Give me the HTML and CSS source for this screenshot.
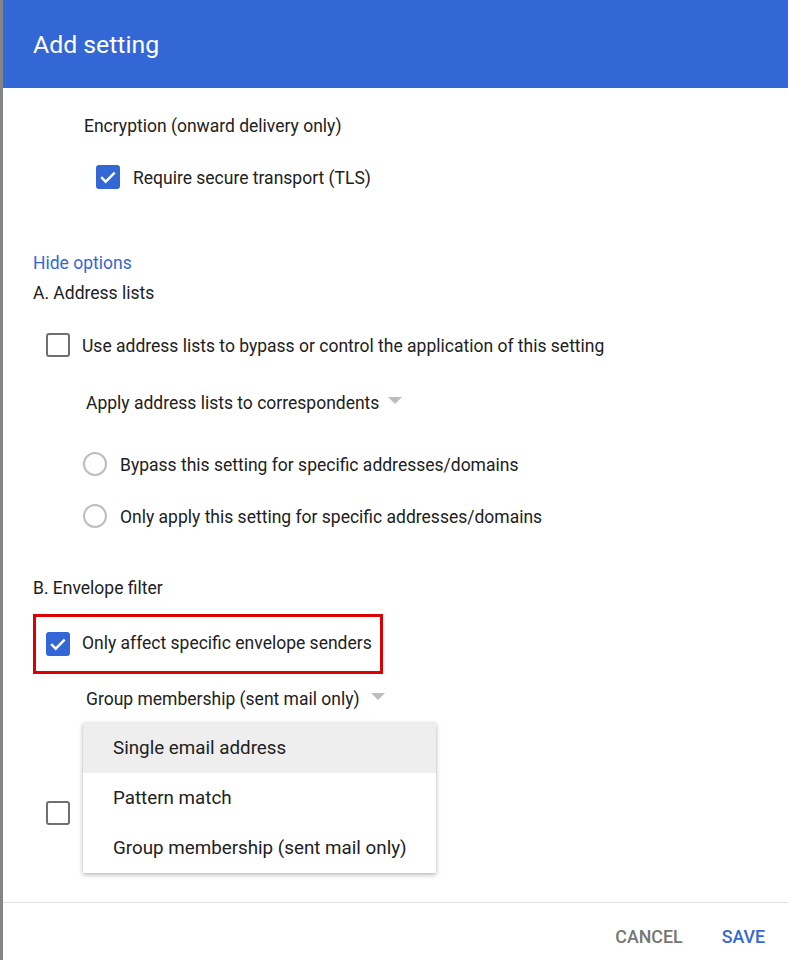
FILE: index.html
```html
<!DOCTYPE html>
<html>
<head>
<meta charset="utf-8">
<link rel="stylesheet" href="styles.css">
</head>
<body>
<div class="page">
  <div class="backdrop"></div>
  <div class="dialog">
    <div class="header"><h1 class="title">Add setting</h1></div>
    <div class="content">
      <div class="row r-enc">Encryption (onward delivery only)</div>
      <div class="row r-tls">
        <span class="cb checked"><svg viewBox="0 0 24 24" width="24" height="24"><path d="M5.2 12.2l4.5 4.5 9-9" fill="none" stroke="#fff" stroke-width="2.4"/></svg></span>
        <span class="lbl-tls">Require secure transport (TLS)</span>
      </div>
      <div class="row r-hide"><a class="link">Hide options</a></div>
      <div class="row r-a">A. Address lists</div>
      <div class="row r-use">
        <span class="cb"></span>
        <span class="lbl">Use address lists to bypass or control the application of this setting</span>
      </div>
      <div class="row r-apply">
        <span class="select">Apply address lists to correspondents</span><span class="tri tri-apply"></span>
      </div>
      <div class="row r-rad1">
        <span class="radio"></span><span class="lbl-r">Bypass this setting for specific addresses/domains</span>
      </div>
      <div class="row r-rad2">
        <span class="radio"></span><span class="lbl-r">Only apply this setting for specific addresses/domains</span>
      </div>
      <div class="row r-b">B. Envelope filter</div>
      <div class="hl">
        <span class="cb checked"><svg viewBox="0 0 24 24" width="24" height="24"><path d="M5.2 12.2l4.5 4.5 9-9" fill="none" stroke="#fff" stroke-width="2.4"/></svg></span>
        <span class="lbl">Only affect specific envelope senders</span>
      </div>
      <div class="row r-group">
        <span class="select">Group membership (sent mail only)</span><span class="tri tri-group"></span>
        <div class="menu">
          <div class="item active">Single email address</div>
          <div class="item">Pattern match</div>
          <div class="item">Group membership (sent mail only)</div>
        </div>
      </div>
      <div class="row r-last">
        <span class="cb"></span>
      </div>
    </div>
    <div class="footer">
      <span class="btn cancel">CANCEL</span>
      <span class="btn save">SAVE</span>
    </div>
  </div>
</div>
</body>
</html>
```

FILE: styles.css
```css
html, body {
  margin: 0;
  padding: 0;
  height: 100%;
  background: #fff;
}
body {
  font-family: Roboto, "Noto Sans", "Liberation Sans", sans-serif;
  font-size: 17.5px;
  color: #212121;
}
.page {
  display: flex;
  height: 960px;
  overflow: hidden;
}
.backdrop {
  width: 3px;
  flex: none;
  background: #858585;
}
.dialog {
  flex: 1;
  display: flex;
  flex-direction: column;
  background: #fff;
}
.header {
  height: 88px;
  background: #3367d6;
  display: flex;
  align-items: center;
  padding-left: 30px;
  flex: none;
}
.title {
  margin: 0;
  font-size: 24.8px;
  font-weight: 400;
  color: #fff;
  padding-bottom: 0;
}
.content {
  padding-left: 30px;
  padding-top: 26px;
  height: 788px;
  flex: none;
}
.row {
  display: flex;
  align-items: center;
  height: 24px;
  position: relative;
}
.r-enc { padding-left: 51px; }
.r-tls { margin-top: 27px; padding-left: 63px; }
.lbl-tls { margin-left: 13px; padding-top: 1px; }
.r-hide { margin-top: 62px; }
.link { color: #3367d6; }
.r-a { margin-top: 6px; }
.r-use { margin-top: 28px; padding-left: 13px; }
.lbl { margin-left: 12px; padding-top: 1px; }
.r-apply { margin-top: 34px; padding-left: 53px; }
.r-rad1 { margin-top: 37px; padding-left: 50px; }
.r-rad2 { margin-top: 28px; padding-left: 50px; }
.lbl-r { margin-left: 13px; padding-top: 1px; }
.r-b { margin-top: 48px; }
.hl {
  margin-top: 14px;
  display: flex;
  align-items: center;
  height: 54px;
  border: 3px solid #dd0000;
  padding-left: 10px;
  box-sizing: content-box;
  width: 334px;
}
.hl .lbl { padding-top: 0; margin-top: -2px; }
.r-group { margin-top: 13px; padding-left: 53px; }
.r-last { margin-top: 90px; padding-left: 13px; }

.cb {
  width: 24px;
  height: 24px;
  box-sizing: border-box;
  border: 2px solid #6f6f6f;
  border-radius: 3px;
  flex: none;
  display: block;
}
.cb.checked {
  border: none;
  background: #3367d6;
}
.cb svg { display: block; }
.radio {
  width: 24px;
  height: 24px;
  box-sizing: border-box;
  border: 2px solid #bdbdbd;
  border-radius: 50%;
  flex: none;
}
.tri {
  width: 0;
  height: 0;
  border-left: 7px solid transparent;
  border-right: 7px solid transparent;
  border-top: 7px solid #bdbdbd;
  align-self: flex-start;
  margin-top: 6px;
}
.tri-apply { margin-left: 9px; }
.tri-group { margin-left: 11px; }

.menu {
  position: absolute;
  left: 50px;
  top: 36px;
  width: 353px;
  background: #fff;
  box-shadow: 0 2px 5px rgba(0,0,0,0.25), 0 0 2px rgba(0,0,0,0.12);
  z-index: 5;
  font-size: 18.8px;
}
.item {
  height: 50px;
  display: flex;
  align-items: center;
  padding-left: 30px;
}
.item.active { background: #eeeeee; }

.footer {
  border-top: 1px solid #e0e0e0;
  flex: 1;
  display: flex;
  justify-content: flex-end;
  align-items: center;
  padding-right: 23px;
  gap: 39px;
  padding-top: 9px;
}
.btn {
  font-weight: 500;
  font-size: 17.8px;
}
.cancel { color: #757575; }
.save { color: #3367d6; }
```
